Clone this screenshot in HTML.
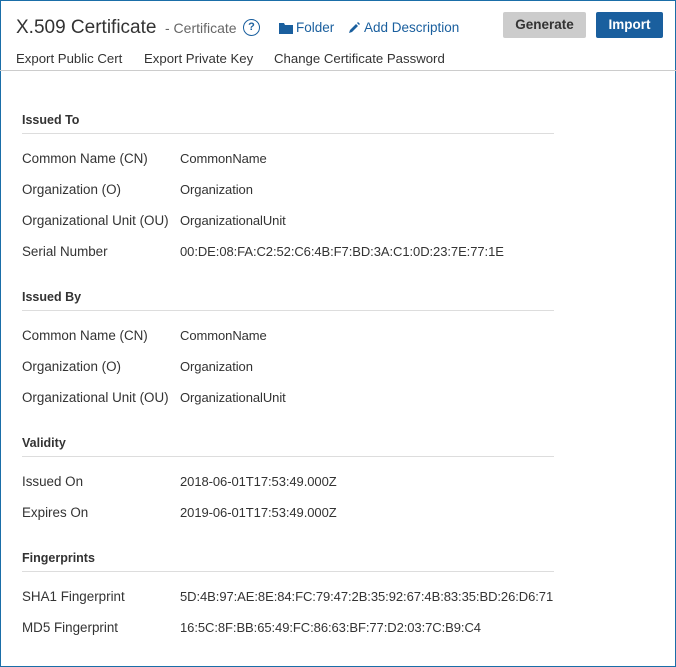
<!DOCTYPE html>
<html><head><style>
html,body{margin:0;padding:0;}
body{width:676px;height:667px;position:relative;font-family:"Liberation Sans",sans-serif;color:#333;background:#fff;overflow:hidden;}
.frame{position:absolute;left:0;top:0;width:674px;height:665px;border:1px solid #1a6ea8;}
.a{position:absolute;white-space:nowrap;}
.t{font-size:19px;color:#333;top:17px;left:16px;}
.sub{font-size:14px;color:#666;top:20px;left:165px;}
.lnk{font-size:13.5px;color:#1a5f9e;top:20px;}
.btn{position:absolute;top:12px;height:26px;line-height:26px;text-align:center;font-size:13.5px;font-weight:bold;border-radius:2px;}
.nav{font-size:13.2px;top:51px;color:#333;}
.hr{position:absolute;left:0;width:676px;top:70px;border-top:1px solid #ccc;}
.h{font-size:12.5px;font-weight:bold;left:22px;color:#333;}
.ul{position:absolute;left:22px;width:532px;border-top:1px solid #ddd;}
.l{font-size:13.4px;left:22px;}
.v{font-size:13px;left:180px;letter-spacing:-0.07px;}
</style></head><body>
<div class="frame"></div>
<div class="a t">X.509 Certificate</div>
<div class="a sub">- Certificate</div>
<div class="a" style="left:243px;top:19px;width:15px;height:15px;border:1.5px solid #1a5f9e;border-radius:50%;font-size:11px;font-weight:bold;color:#1a5f9e;text-align:center;line-height:15px;">?</div>
<svg class="a" style="left:279px;top:22px" width="14" height="12"><path d="M0 1h5l1 2h8v9H0z" fill="#1a5f9e"/></svg>
<div class="a lnk" style="left:296px">Folder</div>
<svg class="a" style="left:348px;top:22px" width="12" height="12"><path d="M1 11l1-3 6-6 2 2-6 6z M9 1l1-1 2 2-1 1z" fill="#1a5f9e"/></svg>
<div class="a lnk" style="left:364px">Add Description</div>
<div class="btn" style="left:503px;width:83px;background:#ccc;color:#333;">Generate</div>
<div class="btn" style="left:596px;width:67px;background:#1a5f9e;color:#fff;">Import</div>
<div class="a nav" style="left:16px">Export Public Cert</div>
<div class="a nav" style="left:144px">Export Private Key</div>
<div class="a nav" style="left:274px">Change Certificate Password</div>
<div class="hr"></div>

<div class="a h" style="top:113px">Issued To</div><div class="ul" style="top:133px"></div>
<div class="a l" style="top:151px">Common Name (CN)</div><div class="a v" style="top:151px">CommonName</div>
<div class="a l" style="top:182px">Organization (O)</div><div class="a v" style="top:182px">Organization</div>
<div class="a l" style="top:213px">Organizational Unit (OU)</div><div class="a v" style="top:213px">OrganizationalUnit</div>
<div class="a l" style="top:244px">Serial Number</div><div class="a v" style="top:244px">00:DE:08:FA:C2:52:C6:4B:F7:BD:3A:C1:0D:23:7E:77:1E</div>

<div class="a h" style="top:290px">Issued By</div><div class="ul" style="top:310px"></div>
<div class="a l" style="top:328px">Common Name (CN)</div><div class="a v" style="top:328px">CommonName</div>
<div class="a l" style="top:359px">Organization (O)</div><div class="a v" style="top:359px">Organization</div>
<div class="a l" style="top:390px">Organizational Unit (OU)</div><div class="a v" style="top:390px">OrganizationalUnit</div>

<div class="a h" style="top:436px">Validity</div><div class="ul" style="top:456px"></div>
<div class="a l" style="top:474px">Issued On</div><div class="a v" style="top:474px">2018-06-01T17:53:49.000Z</div>
<div class="a l" style="top:505px">Expires On</div><div class="a v" style="top:505px">2019-06-01T17:53:49.000Z</div>

<div class="a h" style="top:551px">Fingerprints</div><div class="ul" style="top:571px"></div>
<div class="a l" style="top:589px">SHA1 Fingerprint</div><div class="a v" style="top:589px">5D:4B:97:AE:8E:84:FC:79:47:2B:35:92:67:4B:83:35:BD:26:D6:71</div>
<div class="a l" style="top:620px">MD5 Fingerprint</div><div class="a v" style="top:620px">16:5C:8F:BB:65:49:FC:86:63:BF:77:D2:03:7C:B9:C4</div>
</body></html>
